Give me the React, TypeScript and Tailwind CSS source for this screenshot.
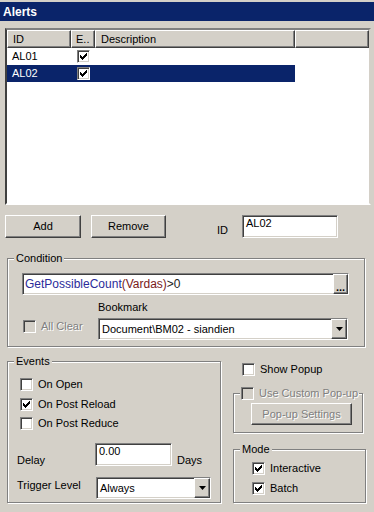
import React from "react";

const sunken =
  "border border-t-[#808080] border-l-[#808080] border-b-white border-r-white shadow-[inset_1px_1px_0_#404040,inset_-1px_-1px_0_#d4d0c8]";
const raised =
  "border border-t-white border-l-white border-b-[#404040] border-r-[#404040] shadow-[inset_-1px_-1px_0_#808080]";
const etched =
  "relative border border-[#808080] shadow-[inset_1px_1px_0_#fff,1px_1px_0_#fff]";
const disabledText = "text-[#808080] [text-shadow:1px_1px_0_#fff]";

const CheckMark = () => (
  <svg width="7" height="7" viewBox="0 0 7 7" shapeRendering="crispEdges">
    <rect x="0" y="2" width="1" height="3" fill="#000" />
    <rect x="1" y="3" width="1" height="3" fill="#000" />
    <rect x="2" y="4" width="1" height="3" fill="#000" />
    <rect x="3" y="3" width="1" height="3" fill="#000" />
    <rect x="4" y="2" width="1" height="3" fill="#000" />
    <rect x="5" y="1" width="1" height="3" fill="#000" />
    <rect x="6" y="0" width="1" height="3" fill="#000" />
  </svg>
);

const Check: React.FC<{ checked?: boolean; disabled?: boolean }> = ({
  checked,
  disabled,
}) => (
  <span
    className={`inline-flex w-[13px] h-[13px] shrink-0 items-center justify-center ${sunken} ${
      disabled ? "bg-[#d4d0c8]" : "bg-white"
    }`}
  >
    {checked && <CheckMark />}
  </span>
);

const DropButton = () => (
  <span className={`flex w-[16px] h-full shrink-0 items-center justify-center bg-[#d4d0c8] ${raised}`}>
    <svg width="7" height="4" viewBox="0 0 7 4">
      <polygon points="0,0 7,0 3.5,4" fill="#000" />
    </svg>
  </span>
);

const Legend: React.FC<{ children: React.ReactNode }> = ({ children }) => (
  <span className="absolute left-[6px] -top-[7px] h-[13px] px-[2px] bg-[#d4d0c8] leading-[13px] flex items-center">
    {children}
  </span>
);

const CheckRow: React.FC<{ label: string; checked?: boolean; className?: string }> = ({
  label,
  checked,
  className,
}) => (
  <div className={`flex items-center h-[13px] ${className ?? ""}`}>
    <Check checked={checked} />
    <span className="ml-[5px] leading-[13px]">{label}</span>
  </div>
);

const columns = [
  { name: "ID", w: "w-[64px] pl-[5px]" },
  { name: "E..", w: "w-[24px] pl-[4px]" },
  { name: "Description", w: "w-[200px] pl-[5px]" },
];

const alerts = [
  { id: "AL01", enabled: true, selected: false },
  { id: "AL02", enabled: true, selected: true },
];

export default function App() {
  return (
    <div className="w-[374px] h-[512px] overflow-hidden bg-[#d4d0c8] text-[11px] text-black font-['Liberation_Sans',Arial,sans-serif]">
      {/* title */}
      <div className="pt-[2px]">
        <div className="h-[19px] bg-[#0a246a] text-white font-bold text-[12px] pl-[3px] flex items-center">
          Alerts
        </div>
      </div>

      {/* list */}
      <div className="ml-[5px] mt-[7px] w-[366px] h-[177px] bg-white border-2 border-t-[#808080] border-l-[#404040] border-b-white border-r-[#d4d0c8]">
        <div className="flex h-[18px]">
          {columns.map((c) => (
            <div
              key={c.name}
              className={`${c.w} h-full flex items-center whitespace-nowrap overflow-hidden bg-[#d4d0c8] ${raised}`}
            >
              {c.name}
            </div>
          ))}
          <div className={`flex-1 h-full bg-[#d4d0c8] ${raised}`} />
        </div>
        {alerts.map((a) => (
          <div key={a.id} className="flex h-[17px]">
            <div
              className={`flex w-[288px] h-full items-center ${
                a.selected ? "bg-[#0a246a] text-white" : ""
              }`}
            >
              <span className="w-[64px] pl-[5px]">{a.id}</span>
              <span className="w-[24px] pl-[6px] flex items-center">
                <Check checked={a.enabled} />
              </span>
            </div>
          </div>
        ))}
      </div>

      {/* buttons */}
      <div className="flex items-start mt-[10px] pl-[5px] h-[23px]">
        <button className={`w-[76px] h-[23px] bg-[#d4d0c8] ${raised}`}>Add</button>
        <button className={`ml-[10px] w-[75px] h-[23px] bg-[#d4d0c8] ${raised}`}>Remove</button>
        <span className="ml-[51px] mt-[10px] leading-[11px]">ID</span>
        <div className={`ml-[14px] w-[96px] h-[23px] bg-white pl-[3px] pt-[1px] leading-[13px] ${sunken}`}>
          AL02
        </div>
      </div>

      {/* condition */}
      <div className={`${etched} ml-[7px] mt-[20px] w-[358px] h-[89px] pl-[14px] pt-[14px]`}>
        <Legend>Condition</Legend>
        <div className={`flex items-center w-[327px] h-[22px] bg-white ${sunken}`}>
          <span className="flex-1 pl-[2px] text-[12px]">
            <span className="text-[#2b2b9a]">GetPossibleCount</span>
            <span className="text-[#7a1a1a]">(Vardas)</span>
            <span className="text-[#222]">&gt;0</span>
          </span>
          <span className={`flex w-[15px] h-full shrink-0 items-end justify-center bg-[#d4d0c8] font-bold leading-[12px] ${raised}`}>
            ...
          </span>
        </div>
        <div className="flex mt-[6px]">
          <div className="w-[76px] pl-[1px] pt-[19px] flex items-start">
            <Check disabled />
            <span className={`ml-[5px] leading-[13px] ${disabledText}`}>All Clear</span>
          </div>
          <div className="flex flex-col">
            <span className="leading-[13px]">Bookmark</span>
            <div className={`mt-[4px] flex items-center w-[250px] h-[22px] bg-white ${sunken}`}>
              <span className="flex-1 pl-[3px]">Document\BM02 - siandien</span>
              <DropButton />
            </div>
          </div>
        </div>
      </div>

      {/* bottom */}
      <div className="flex mt-[14px]">
        <div className={`${etched} ml-[7px] w-[214px] h-[142px] pt-[16px]`}>
          <Legend>Events</Legend>
          <CheckRow className="pl-[12px]" label="On Open" />
          <CheckRow className="pl-[12px] mt-[7px]" label="On Post Reload" checked />
          <CheckRow className="pl-[12px] mt-[6px]" label="On Post Reduce" />
          <div className="flex items-start pl-[9px] mt-[13px]">
            <span className="w-[78px] mt-[12px] leading-[11px]">Delay</span>
            <div className={`w-[77px] h-[23px] bg-white pl-[3px] pt-[1px] leading-[13px] ${sunken}`}>
              0.00
            </div>
            <span className="ml-[5px] mt-[12px] leading-[11px]">Days</span>
          </div>
          <div className="flex items-start pl-[9px] mt-[11px]">
            <span className="w-[79px] mt-[3px] leading-[11px]">Trigger Level</span>
            <div className={`flex items-center w-[115px] h-[22px] bg-white ${sunken}`}>
              <span className="flex-1 pl-[3px]">Always</span>
              <DropButton />
            </div>
          </div>
        </div>

        <div className="ml-[12px] w-[133px]">
          <CheckRow className="pl-[9px] mt-[2px]" label="Show Popup" />
          <div className={`${etched} mt-[17px] w-[130px] h-[40px] pl-[17px] pt-[9px]`}>
            <span className="absolute left-[6px] -top-[7px] h-[13px] px-[1px] bg-[#d4d0c8] flex items-center">
              <Check disabled />
              <span className={`ml-[5px] leading-[13px] ${disabledText}`}>Use Custom Pop-up</span>
            </span>
            <button className={`w-[101px] h-[22px] bg-[#d4d0c8] ${raised} ${disabledText}`}>
              Pop-up Settings
            </button>
          </div>
          <div className={`${etched} mt-[16px] w-[133px] h-[54px] pl-[18px] pt-[12px]`}>
            <Legend>Mode</Legend>
            <CheckRow label="Interactive" checked />
            <CheckRow className="mt-[7px]" label="Batch" checked />
          </div>
        </div>
      </div>
    </div>
  );
}
